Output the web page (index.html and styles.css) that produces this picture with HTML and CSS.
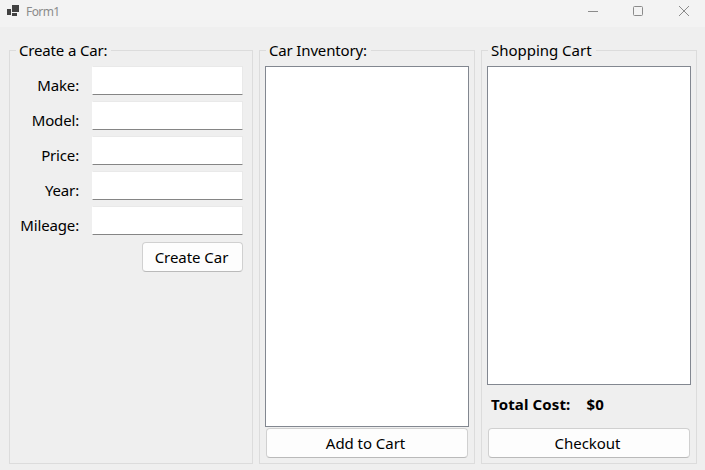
FILE: index.html
```html
<!DOCTYPE html>
<html lang="en">
<head>
<meta charset="utf-8">
<title>Form1</title>
<link rel="stylesheet" href="styles.css">
</head>
<body>
<header class="titlebar">
  <svg class="app-icon" width="12" height="12" viewBox="0 0 12 12" fill="#424242"><path d="M5 0h7v7H5zM0 4h4v6H0zM5 8h5v3H5z"/></svg>
  <span class="caption">Form1</span>
  <svg class="controls" width="102" height="10" viewBox="0 0 102 10" fill="none" stroke="#8b8b8b"><path d="M0 5.5h10"/><rect x="45.5" y=".5" width="9" height="9" rx="1"/><path d="M91 0l10 10M101 0L91 10"/></svg>
</header>
<main class="form">
  <section class="group create">
    <h2 class="legend">Create a Car:</h2>
    <div class="fields">
      <label class="row"><span>Make:</span><input class="field" type="text"></label>
      <label class="row"><span>Model:</span><input class="field" type="text"></label>
      <label class="row"><span>Price:</span><input class="field" type="text"></label>
      <label class="row"><span>Year:</span><input class="field" type="text"></label>
      <label class="row"><span>Mileage:</span><input class="field" type="text"></label>
    </div>
    <button class="button create-button">Create Car</button>
  </section>
  <section class="group">
    <h2 class="legend">Car Inventory:</h2>
    <div class="list inventory"></div>
    <button class="button">Add to Cart</button>
  </section>
  <section class="group">
    <h2 class="legend legend-cart">Shopping Cart</h2>
    <div class="list cart"></div>
    <div class="total"><span>Total Cost:</span><span>$0</span></div>
    <button class="button">Checkout</button>
  </section>
</main>
</body>
</html>
```
FILE: styles.css
```css
* { box-sizing: border-box; }
body {
  margin: 0;
  height: 470px;
  overflow: hidden;
  background: #efefef;
  color: #000;
  font: 15px/20px "Noto Sans", sans-serif;
  letter-spacing: -0.16px;
}
.titlebar {
  display: flex;
  align-items: flex-start;
  height: 27px;
  padding: 5px 15px 0 7px;
  background: #f3f3f3;
}
.caption {
  margin-left: 7px;
  margin-top: -1px;
  font-size: 12px;
  line-height: 16px;
  letter-spacing: -0.6px;
  color: #8b8b8b;
}
.controls { margin: 1px 0 0 auto; }
.form {
  display: grid;
  grid-template-columns: 244px 216px 216px;
  gap: 6px;
  height: 437px;
  padding: 23px 0 0 9px;
}
.group {
  height: 414px;
  border: 1px solid #dcdcdc;
  padding: 0 5px;
  display: flex;
  flex-direction: column;
}
.legend {
  align-self: flex-start;
  height: 20px;
  margin: -11px 0 6px 1px;
  padding: 0 4px 0 3px;
  background: #efefef;
  font-size: inherit;
  font-weight: 400;
  white-space: nowrap;
}
.legend-cart { letter-spacing: -0.02px; }
.fields { display: grid; gap: 6px; }
.create { padding-right: 9px; }
.row {
  display: grid;
  grid-template-columns: 65px 151px;
  column-gap: 12px;
  height: 29px;
}
.row span {
  padding: 9px 1px 0 0;
  text-align: right;
  white-space: nowrap;
}
.field {
  width: 151px;
  height: 29px;
  border: 1px solid #e9e9e9;
  border-left-color: #fff;
  border-bottom-color: #858585;
  border-radius: 1px;
  background: #fff;
  outline: none;
}
.button {
  height: 30px;
  margin: 1px 1px 0;
  padding: 0 3px 0 0;
  border: 1px solid #d0d0d0;
  border-bottom-color: #bababa;
  border-radius: 4px;
  background: #fdfdfd;
  color: #000;
  font: inherit;
  letter-spacing: -0.05px;
}
.create-button {
  align-self: flex-end;
  width: 101px;
  margin: 7px 0 0;
  padding-right: 2px;
}
.list {
  background: #fff;
  border: 1px solid #828790;
  flex: none;
}
.inventory { height: 361px; }
.cart { height: 319px; }
.total {
  display: flex;
  gap: 16px;
  height: 42px;
  padding: 9px 4px 0;
  font-weight: 700;
  letter-spacing: 0.12px;
}
```
